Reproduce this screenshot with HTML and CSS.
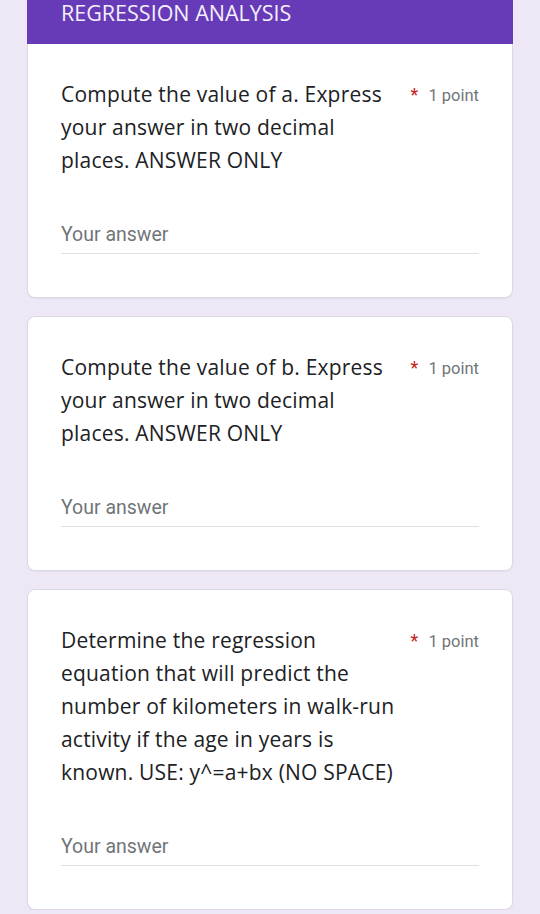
FILE: index.html
```html
<!DOCTYPE html>
<html lang="en">
<head>
    <meta charset="UTF-8">
    <meta name="viewport" content="width=device-width, initial-scale=1.0">
    <title>Regression Analysis</title>
    <link rel="stylesheet" href="styles.css">
</head>
<body>
    <div class="form">
        <div class="section-header">REGRESSION ANALYSIS</div>

        <div class="card card-first">
            <div class="question-head">
                <div class="question-title">Compute the value of a. Express your answer in two decimal places. ANSWER ONLY</div>
                <div class="points"><span class="required">*</span> 1 point</div>
            </div>
            <div class="answer">Your answer</div>
        </div>

        <div class="card">
            <div class="question-head">
                <div class="question-title">Compute the value of b. Express your answer in two decimal places. ANSWER ONLY</div>
                <div class="points"><span class="required">*</span> 1 point</div>
            </div>
            <div class="answer">Your answer</div>
        </div>

        <div class="card">
            <div class="question-head">
                <div class="question-title">Determine the regression equation that will predict the number of kilometers in walk-run activity if the age in years is known. USE: y^=a+bx (NO SPACE)</div>
                <div class="points"><span class="required">*</span> 1 point</div>
            </div>
            <div class="answer">Your answer</div>
        </div>
    </div>
</body>
</html>
```

FILE: styles.css
```css
body {
    margin: 0;
    background: #ede7f6;
    font-family: 'Open Sans', 'Noto Sans', sans-serif;
    color: #202124;
}

.form {
    width: 486px;
    margin: 0 0 0 27px;
    display: flex;
    flex-direction: column;
    gap: 18px;
}

.section-header {
    background: #673ab7;
    color: #f3eefb;
    height: 44px;
    box-sizing: border-box;
    padding: 2px 0 0 34px;
    font-size: 21.5px;
    line-height: 22px;
    margin-bottom: -18px;
}

.card {
    background: white;
    border: 1px solid #dcd8e3;
    border-radius: 8px;
    padding: 34px 33px 43px 33px;
    box-shadow: 0 1px 1px rgba(0,0,0,0.04);
}

.card-first {
    border-top: none;
    border-radius: 0 0 8px 8px;
}

.question-head {
    display: flex;
    justify-content: space-between;
    align-items: flex-start;
}

.question-title {
    width: 340px;
    font-size: 21px;
    letter-spacing: 0.2px;
    line-height: 33px;
}

.points {
    font-family: Roboto, 'Liberation Sans', sans-serif;
    font-size: 16.5px;
    color: #70757a;
    line-height: 33px;
    white-space: nowrap;
}

.required {
    color: #c5221f;
    font-size: 18px;
    margin-right: 6px;
}

.answer {
    margin-top: 46px;
    font-family: Roboto, 'Liberation Sans', sans-serif;
    font-size: 19.5px;
    color: #70757a;
    padding-bottom: 7px;
    border-bottom: 1px solid #e0e0e0;
}
```
